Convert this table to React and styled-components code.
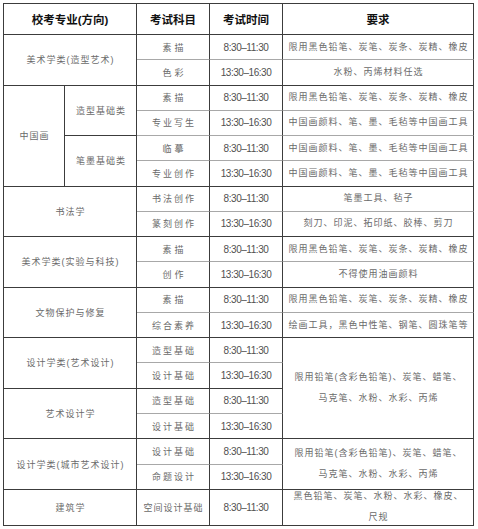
import React from 'react';
import styled, { createGlobalStyle } from 'styled-components';

const GlobalStyle = createGlobalStyle`
  html, body {
    margin: 0;
    padding: 0;
    background: #ffffff;
  }
`;

const DARK = '#3c3c3c';
const LIGHT = '#a8a8a8';

const Page = styled.div`
  width: 478px;
  height: 529px;
  padding: 3px 4px 0 3px;
  box-sizing: border-box;
  background: #fff;
`;

const Grid = styled.div`
  display: grid;
  grid-template-columns: 61px 72px 73px 73px 1fr;
  grid-template-rows: 31px repeat(18, 25.28px) 36px;
  border-top: 1px solid ${DARK};
  border-left: 1px solid ${DARK};
  box-sizing: border-box;
`;

const Cell = styled.div`
  grid-column: ${p => p.$col} / span ${p => p.$cspan || 1};
  grid-row: ${p => p.$row} / span ${p => p.$rspan || 1};
  display: flex;
  align-items: center;
  justify-content: center;
  text-align: center;
  box-sizing: border-box;
  border-right: 1px solid ${DARK};
  border-bottom: 1px solid ${p => (p.$light ? LIGHT : DARK)};
  overflow: hidden;
`;

const HeadText = styled.span`
  font-family: "Liberation Sans", "Noto Sans CJK SC", sans-serif;
  font-weight: 700;
  font-size: 11.5px;
  color: #111;
`;

const MajorText = styled.span`
  font-family: "Liberation Sans", "Noto Sans CJK SC", sans-serif;
  font-size: 9px;
  letter-spacing: 1px;
  padding-left: 1px;
  color: #6a6a6a;
`;

const SubjectText = styled.span`
  font-family: "Noto Sans CJK SC", sans-serif;
  font-size: 9px;
  letter-spacing: ${p => p.$gap}px;
  padding-left: ${p => p.$gap}px;
  color: #6a6a6a;
`;

const TimeText = styled.span`
  font-family: "Liberation Sans", sans-serif;
  font-size: 10px;
  letter-spacing: -0.45px;
  color: #505050;
`;

const ReqText = styled.span`
  font-family: "Liberation Sans", "Noto Sans CJK SC", sans-serif;
  font-size: 9px;
  line-height: 21px;
  letter-spacing: 1px;
  padding-left: 1px;
  color: #6a6a6a;
  white-space: pre-line;
`;

const M = '8:30–11:30';
const A = '13:30–16:30';
const PENCIL = '限用黑色铅笔、炭笔、炭条、炭精、橡皮';
const INK = '中国画颜料、笔、墨、毛毡等中国画工具';
const DESIGN = '限用铅笔(含彩色铅笔)、炭笔、蜡笔、\n马克笔、水粉、水彩、丙烯';

// each group: major name, optional sub majors, rows of [subject, time, requirement]
const groups = [
  { name: '美术学类(造型艺术)', rows: [['素描', M, PENCIL], ['色彩', A, '水粉、丙烯材料任选']] },
  {
    name: '中国画',
    subs: [
      { name: '造型基础类', rows: [['素描', M, PENCIL], ['专业写生', A, INK]] },
      { name: '笔墨基础类', rows: [['临摹', M, INK], ['专业创作', A, INK]] },
    ],
  },
  { name: '书法学', rows: [['书法创作', M, '笔墨工具、毡子'], ['篆刻创作', A, '刻刀、印泥、拓印纸、胶棒、剪刀']] },
  { name: '美术学类(实验与科技)', rows: [['素描', M, PENCIL], ['创作', A, '不得使用油画颜料']] },
  { name: '文物保护与修复', rows: [['素描', M, PENCIL], ['综合素养', A, '绘画工具，黑色中性笔、钢笔、圆珠笔等']] },
  { name: '设计学类(艺术设计)', rows: [['造型基础', M], ['设计基础', A]], req: DESIGN, reqSpan: 4 },
  { name: '艺术设计学', rows: [['造型基础', M], ['设计基础', A]] },
  { name: '设计学类(城市艺术设计)', rows: [['设计基础', M], ['命题设计', A]], req: DESIGN, reqSpan: 2 },
  { name: '建筑学', rows: [['空间设计基础', M]], req: '黑色铅笔、炭笔、水粉、水彩、橡皮、\n尺规', reqSpan: 1 },
];

const gapFor = text => (text.length <= 2 ? 3 : text.length <= 4 ? 2 : 1);

function buildCells() {
  const cells = [];
  let row = 2;
  groups.forEach((g, gi) => {
    const rows = g.subs ? g.subs.flatMap(s => s.rows) : g.rows;
    cells.push(
      <Cell key={`g${gi}`} $col={1} $cspan={g.subs ? 1 : 2} $row={row} $rspan={rows.length}>
        <MajorText>{g.name}</MajorText>
      </Cell>
    );
    if (g.subs) {
      let r = row;
      g.subs.forEach((s, si) => {
        cells.push(
          <Cell key={`s${gi}-${si}`} $col={2} $row={r} $rspan={s.rows.length}>
            <MajorText>{s.name}</MajorText>
          </Cell>
        );
        r += s.rows.length;
      });
    }
    if (g.req) {
      cells.push(
        <Cell key={`q${gi}`} $col={5} $row={row} $rspan={g.reqSpan}>
          <ReqText>{g.req}</ReqText>
        </Cell>
      );
    }
    rows.forEach(([subject, time, req], ri) => {
      const light = ri < rows.length - 1;
      cells.push(
        <Cell key={`a${gi}-${ri}`} $col={3} $row={row + ri} $light={light}>
          <SubjectText $gap={gapFor(subject)}>{subject}</SubjectText>
        </Cell>,
        <Cell key={`b${gi}-${ri}`} $col={4} $row={row + ri} $light={light}>
          <TimeText>{time}</TimeText>
        </Cell>
      );
      if (req) {
        cells.push(
          <Cell key={`c${gi}-${ri}`} $col={5} $row={row + ri} $light={light}>
            <ReqText>{req}</ReqText>
          </Cell>
        );
      }
    });
    row += rows.length;
  });
  return cells;
}

export default function App() {
  return (
    <Page>
      <GlobalStyle />
      <Grid>
        <Cell $col={1} $cspan={2} $row={1}><HeadText>校考专业(方向)</HeadText></Cell>
        <Cell $col={3} $row={1}><HeadText>考试科目</HeadText></Cell>
        <Cell $col={4} $row={1}><HeadText>考试时间</HeadText></Cell>
        <Cell $col={5} $row={1}><HeadText>要求</HeadText></Cell>
        {buildCells()}
      </Grid>
    </Page>
  );
}
